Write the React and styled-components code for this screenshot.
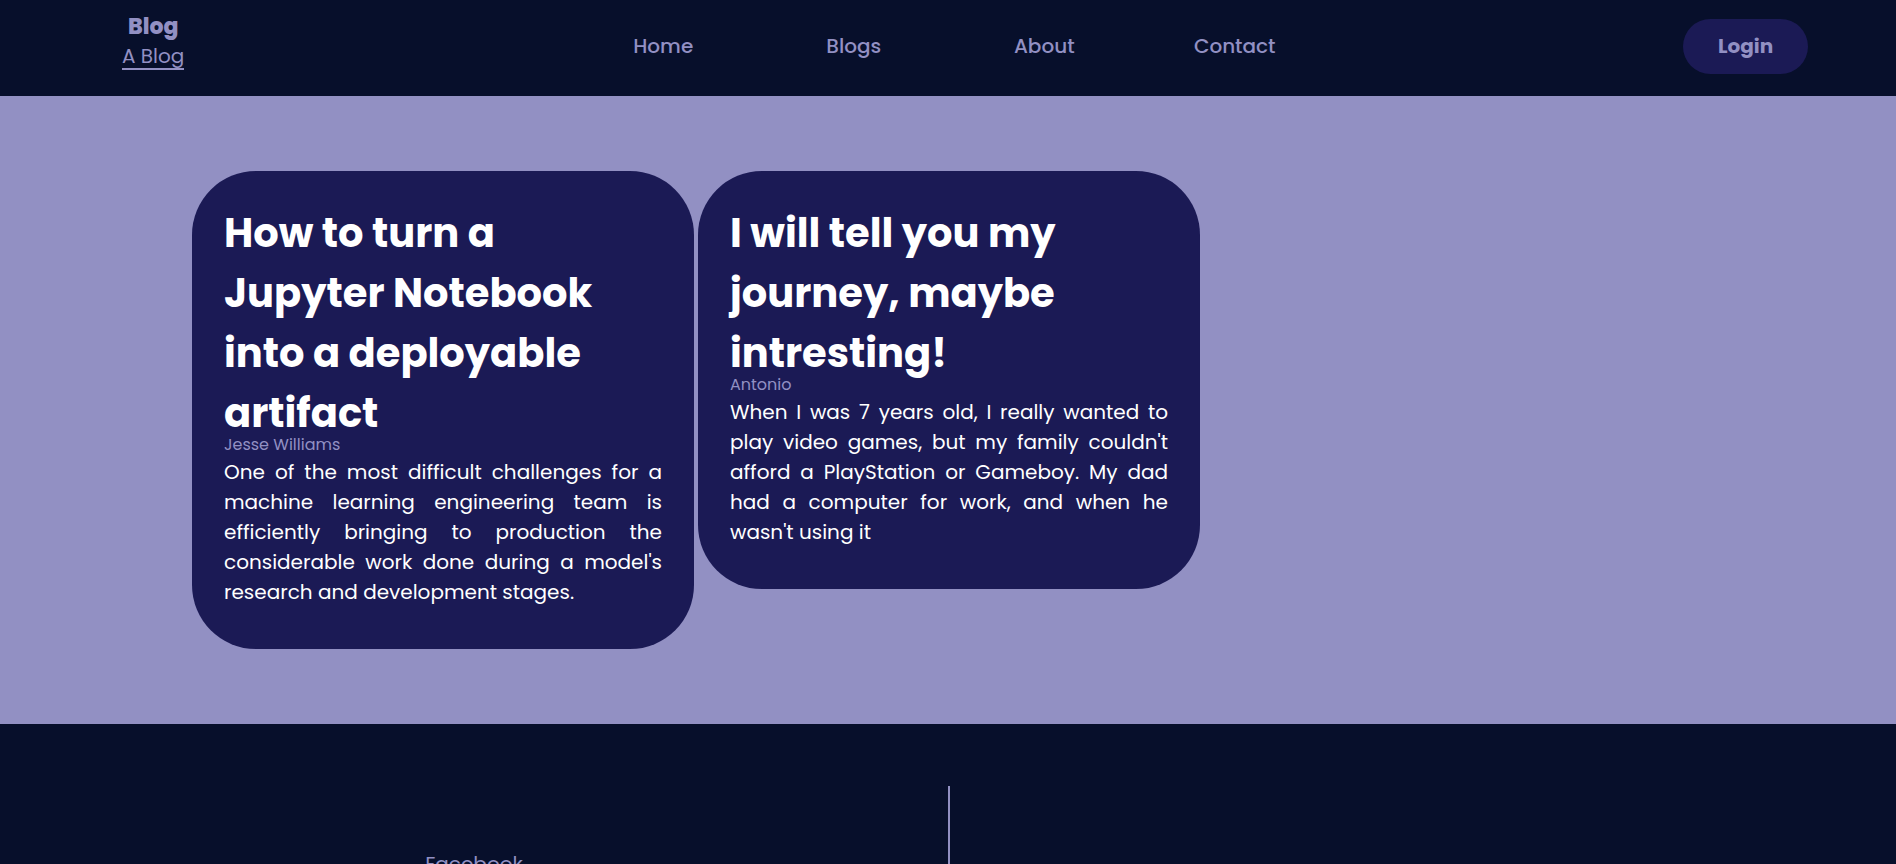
import React from "react";
import styled, { createGlobalStyle } from "styled-components";

const colors = {
  night: "#070f2b",
  indigo: "#1b1a55",
  lavender: "#9290c3",
};

const GlobalStyle = createGlobalStyle`
  *, *::before, *::after { box-sizing: border-box; margin: 0; padding: 0; }
  html { scrollbar-width: none; }
  body {
    background: ${colors.night};
    color: ${colors.lavender};
    font-family: Poppins, Inter, "Open Sans", sans-serif;
    font-size: 20px;
    line-height: 30px;
  }
`;

const Header = styled.header`
  display: grid;
  grid-template-columns: 1fr minmax(0, 762px) 1fr;
  align-items: center;
  height: 96px;
  padding: 0 88px 4px 90px;
`;

const Brand = styled.a`
  display: flex;
  flex-direction: column;
  align-items: center;
  justify-self: start;
  margin: 0 0 12px 32px;
  color: inherit;
  text-decoration: none;
`;

const BrandName = styled.strong`
  font-size: 22px;
  line-height: 34px;
  font-weight: 800;
`;

const Tagline = styled.span`
  line-height: 24px;
  border-bottom: 2px solid ${colors.lavender};
`;

const Nav = styled.nav`
  display: grid;
  grid-template-columns: repeat(4, 1fr);
`;

const NavLink = styled.a`
  color: inherit;
  font-weight: 500;
  text-align: center;
  text-decoration: none;
`;

const LoginButton = styled.button`
  justify-self: end;
  width: 125px;
  height: 55px;
  border: 0;
  border-radius: 28px;
  background: ${colors.indigo};
  color: ${colors.lavender};
  font: inherit;
  font-weight: 700;
`;

const Posts = styled.main`
  display: grid;
  grid-template-columns: repeat(3, 1fr);
  align-items: start;
  gap: 4px;
  padding: 75px 190px 75px 192px;
  background: ${colors.lavender};
`;

const Card = styled.article`
  padding: 32px 32px 42px;
  border-radius: 64px;
  background: ${colors.indigo};
  color: #fff;
`;

const Title = styled.h2`
  font-size: 40px;
  line-height: 60px;
  font-weight: 700;
`;

const Author = styled.p`
  margin-top: -10px;
  font-size: 16px;
  line-height: 24px;
  color: ${colors.lavender};
`;

const Excerpt = styled.p`
  text-align: justify;
`;

const Footer = styled.footer`
  display: grid;
  grid-template-columns: 1fr 1fr;
  padding: 62px 0;
`;

const FooterColumn = styled.div`
  display: flex;
  flex-direction: column;
  align-items: center;
  padding: 63px 0;
  border-left: ${({ $divided }) => ($divided ? `2px solid ${colors.lavender}` : "0")};
`;

const FooterLink = styled.a`
  color: inherit;
  text-decoration: none;
`;

const links = ["Home", "Blogs", "About", "Contact"];

const posts = [
  {
    title: "How to turn a Jupyter Notebook into a deployable artifact",
    author: "Jesse Williams",
    excerpt:
      "One of the most difficult challenges for a machine learning engineering team is efficiently bringing to production the considerable work done during a model's research and development stages.",
  },
  {
    title: "I will tell you my journey, maybe intresting!",
    author: "Antonio",
    excerpt:
      "When I was 7 years old, I really wanted to play video games, but my family couldn't afford a PlayStation or Gameboy. My dad had a computer for work, and when he wasn't using it",
  },
];

export default function App() {
  return (
    <>
      <GlobalStyle />
      <Header>
        <Brand href="#">
          <BrandName>Blog</BrandName>
          <Tagline>A Blog</Tagline>
        </Brand>
        <Nav>
          {links.map((label) => (
            <NavLink key={label} href={`#${label.toLowerCase()}`}>{label}</NavLink>
          ))}
        </Nav>
        <LoginButton type="button">Login</LoginButton>
      </Header>
      <Posts>
        {posts.map((post) => (
          <Card key={post.title}>
            <Title>{post.title}</Title>
            <Author>{post.author}</Author>
            <Excerpt>{post.excerpt}</Excerpt>
          </Card>
        ))}
      </Posts>
      <Footer>
        <FooterColumn>
          <FooterLink href="#facebook">Facebook</FooterLink>
        </FooterColumn>
        <FooterColumn $divided />
      </Footer>
    </>
  );
}
